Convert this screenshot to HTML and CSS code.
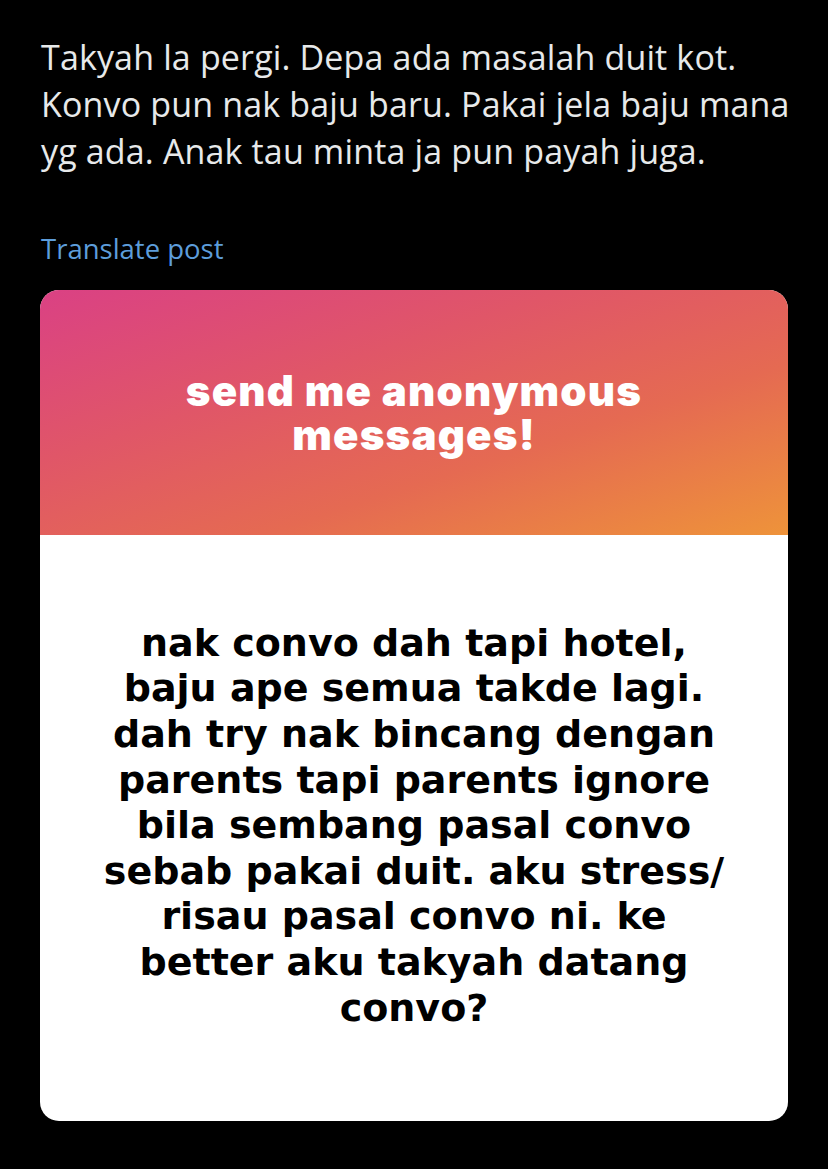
FILE: index.html
```html
<!DOCTYPE html>
<html>
<head>
<meta charset="utf-8">
<link rel="stylesheet" href="styles.css">
</head>
<body>
<main class="post">
  <p class="tweet">Takyah la pergi. Depa ada masalah duit kot.<br>Konvo pun nak baju baru. Pakai jela baju mana<br>yg ada. Anak tau minta ja pun payah juga.</p>
  <a class="translate">Translate post</a>
  <div class="card">
    <div class="card-head">
      <h2 class="card-title"><span class="title-line">send me anonymous</span><span class="title-line">messages!</span></h2>
    </div>
    <div class="card-body">
      <p class="question">nak convo dah tapi hotel,<br>baju ape semua takde lagi.<br>dah try nak bincang dengan<br>parents tapi parents ignore<br>bila sembang pasal convo<br>sebab pakai duit. aku stress/<br>risau pasal convo ni. ke<br>better aku takyah datang<br>convo?</p>
    </div>
  </div>
</main>
</body>
</html>
```

FILE: styles.css
```css
html, body {
  margin: 0;
  padding: 0;
  background: #000;
}
.post {
  padding: 34px 40px 0 40px;
  display: flex;
  flex-direction: column;
  align-items: flex-start;
}
.tweet {
  margin: 0;
  font-family: "Open Sans", "Noto Sans", sans-serif;
  font-size: 34px;
  line-height: 47px;
  letter-spacing: 0.15px;
  color: #e7e9ea;
  white-space: nowrap;
  padding-left: 1px;
}
.translate {
  margin-top: 58px;
  font-family: "Open Sans", "Noto Sans", sans-serif;
  font-size: 27.5px;
  line-height: 32px;
  color: #5d9ddb;
  padding-left: 1px;
}
.card {
  margin-top: 25px;
  width: 748px;
  height: 831px;
  border-radius: 19px;
  overflow: hidden;
  background: #fff;
  display: flex;
  flex-direction: column;
}
.card-head {
  height: 245px;
  flex: none;
  background: linear-gradient(162deg, #da4184 0%, #e05668 35%, #e56a52 65%, #ee933a 100%);
  display: flex;
  align-items: center;
  justify-content: center;
}
.card-title {
  margin: 0;
  font-family: Inter, "Noto Sans", sans-serif;
  font-weight: 900;
  font-size: 42px;
  color: #fff;
  text-align: center;
  letter-spacing: 1.2px;
  display: flex;
  flex-direction: column;
  align-items: center;
}
.title-line {
  display: block;
  height: 44px;
  line-height: 44px;
  overflow: visible;
}
.card-body {
  flex: 1;
  display: flex;
  align-items: center;
  justify-content: center;
}
.question {
  margin: 0;
  padding-bottom: 4px;
  font-family: "DejaVu Sans", sans-serif;
  font-weight: 700;
  font-size: 38px;
  line-height: 45.6px;
  color: #000;
  text-align: center;
}
```
